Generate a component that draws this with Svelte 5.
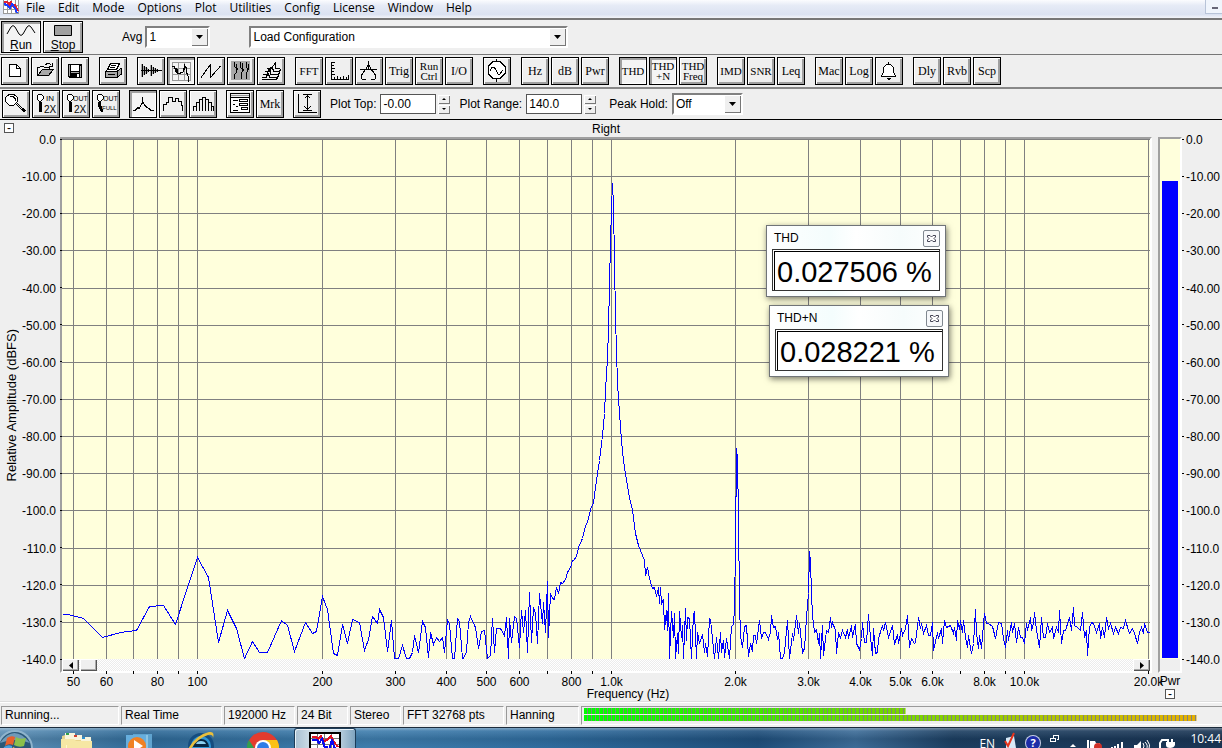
<script lang="ts">
  type Icon = {
    line?: string;
    fill?: string;
    gray?: string;
    grayLine?: string;
    white?: string;
    texts?: { x: number; y: number; size: number; text: string }[];
  };
  type Tool = { label: string; text?: string[]; small?: boolean; icon?: string; on?: boolean };

  const menus = ['File', 'Edit', 'Mode', 'Options', 'Plot', 'Utilities', 'Config', 'License', 'Window', 'Help'];

  const lens = 'M5 2h2l2 2v3l-2 2h-2l-2-2v-3z';
  const lensHandle = 'M5 10h3v10h-3z';

  // toolbar glyphs, drawn on a 24x24 grid
  const icons: Record<string, Icon> = {
    new: { white: 'M6.5 5.5h7l4 4v8h-11z', line: 'M6.5 5.5h7l4 4v8h-11zM13.5 5.5v4h4' },
    open: {
      gray: 'M5.5 17l4-6h11l-4 6z',
      line: 'M4.5 16.5v-8h2l1-1h3l1 1h5v2M4.5 16.5l5-6h11l-5 6zM12.5 5.5l2-1h2l2 2M19.5 4v3.5h-3.5'
    },
    save: {
      fill: 'M5 5h14v14h-13l-1-1z',
      white: 'M8 6h8v6h-8zM14 15h2v3h-2z',
      gray: 'M6 6h1v11h-1zM17 7h1v11h-1zM8 13h8v1h-8z'
    },
    print: {
      white: 'M9.5 4.5h9l-3 7h-9z',
      gray: 'M5 13h12v5h-12zM17 12l3-2v5l-3 3z',
      line: 'M9.5 4.5h9l-3 6h-9zM10 6.5h5M9 8.5h5M4.5 12.5l2-2M16 12.5l4-3M4.5 12.5h12v6h-12zM20.5 9v6l-4 3M7 15.5h7'
    },
    wave: {
      line: 'M2 11.5h21M3.5 5v13M5.5 7v9M7.5 8v7M9.5 10v3M12.5 6v11M14.5 8v7M16.5 9v5M18.5 10v3',
      gray: 'M2 5l8 5v3l-8 5zM11 6l8 5v1l-8 5z'
    },
    spectrum: {
      grayLine: 'M3.5 3.5h18v18h-18zM9.5 3v18M15.5 3v18M3 9.5h18M3 15.5h18',
      line: 'M3 7.5h2l1 2v3l2-3 1 5h2l1-1h2l1-4v-4l2 3v4l2 4 1 6M7.5 9v5M15.5 6v5'
    },
    zigzag: { line: 'M2 18.5L11.5 5.5V18.5L21.5 7' },
    spectrogram: {
      gray: 'M2 2h19v19h-19z',
      line: 'M5.5 3v4l2 3v3l-2 3v4M11.5 3v5l2 3-1 4v5M17.5 3v4l1 4-1 4v5M7.5 5v3l1 3M13.5 4v4l1 4M19.5 5v3l-1 5'
    },
    waterfall: {
      line: 'M3 20.5h14l2-2M3 18.5h4l2-4 2 4h7l2-2M4 15.5h4l2-5 2 5h7l2-2M6 12.5h4l3-4 2 4h5l2-2M8 9.5h4l4-5v5h5M11.5 8v8'
    },
    axes: {
      line: 'M4.5 3v17.5h17M4 3.5h4M4 6.5h3M4 9.5h4M4 12.5h3M4 15.5h4M7.5 18v2M10.5 17v3M13.5 18v2M16.5 17v3M19.5 18v2M21.5 16v4'
    },
    peak: {
      line: 'M11.5 2v9M9 10.5L11.5 5l2.5 5.5M3 10.5h17M9 10l-3 4-2 3 1 3h4M14 10l3 4 2 3-1 3h-4'
    },
    generator: {
      white: 'M8 2h7l5 5v8l-5 5h-7l-5-5v-8z',
      line: 'M8 2.5h7l5 5v7l-5 5h-7l-5-5v-7zM11.5 0v2M11.5 20v3M5 12l2-4h2l2 3 2 4h2l3-4'
    },
    bell: {
      white: 'M4 17l3-4v-5l3-3h3l3 3v5l3 4z',
      line: 'M11.5 3v2M4.5 17.5v-1l2-3v-5l3-3h4l3 3v5l2 3v1z',
      fill: 'M9 19h5l-2 2h-1z'
    },
    zoom: {
      white: 'M5 3h5l3 3v3l-3 4h-5l-3-4v-3z',
      line: 'M5 2.5h5l3.5 3v4l-3.5 3.5h-5l-3.5-3.5v-4zM6 4.5h3l2 2v2M12.5 12.5l8 7.5M13.5 11.5l8 7.5'
    },
    zoomIn: {
      white: lens,
      line: lens,
      fill: lensHandle,
      texts: [{ x: 12, y: 9, size: 8, text: 'IN' }, { x: 10, y: 21, size: 10, text: '2X' }]
    },
    zoomOut: {
      white: lens,
      line: lens,
      fill: lensHandle,
      texts: [{ x: 9, y: 9, size: 7, text: 'OUT' }, { x: 10, y: 21, size: 10, text: '2X' }]
    },
    zoomFull: {
      white: lens,
      line: lens,
      fill: 'M4 10h3v3l2 5v2h-2l-3-6z',
      texts: [{ x: 9, y: 9, size: 7, text: 'OUT' }, { x: 8, y: 18, size: 6, text: 'FULL' }]
    },
    line: { line: 'M2 18.5h2l3-3 1 1 3-5v-7l1 6 2 3 2 2 2 1 2 2h3' },
    octave: { line: 'M2.5 19v-7h3v-2h2v-5h4v4h3v-3h3v3h3v4h1v6' },
    third: {
      line: 'M2.5 19v-5h3v-4h3v-3h3v-2h3v2h3v3h3v4h2v5M5.5 11v8M8.5 8v11M11.5 6v13M14.5 6v13M17.5 8v11M20.5 11v8'
    },
    list: {
      white: 'M3 5h18v15h-18z',
      grayLine: 'M3 3.5h18',
      line: 'M2.5 1.5h19v19h-19zM2 5.5h19M5 8.5h5M5 12.5h2M8 14.5h2M5 18.5h5M11.5 7.5h8v2h-8zM11.5 11.5h8v2h-8zM13.5 15.5h6v2h-6z'
    },
    fit: {
      line: 'M3.5 2v18.5h18M8 2.5h9M8 18.5h9M12.5 3v15M9.5 6.5l3-3 3 3M9.5 14.5l3 3 3-3'
    }
  };

  const mainTools: Tool[][] = [
    [{ label: 'New', icon: 'new' }, { label: 'Open', icon: 'open' }, { label: 'Save', icon: 'save' }],
    [{ label: 'Print', icon: 'print' }],
    [
      { label: 'Time series', icon: 'wave' },
      { label: 'Spectrum', icon: 'spectrum', on: true },
      { label: 'Phase', icon: 'zigzag' },
      { label: 'Spectrogram', icon: 'spectrogram' },
      { label: '3-D surface', icon: 'waterfall' }
    ],
    [
      { label: 'FFT settings', text: ['FFT'], small: true },
      { label: 'Scaling', icon: 'axes' },
      { label: 'Calibration', icon: 'peak' },
      { label: 'Triggering', text: ['Trig'] },
      { label: 'Run control', text: ['Run', 'Ctrl'], small: true },
      { label: 'Device', text: ['I/O'] }
    ],
    [{ label: 'Signal generator', icon: 'generator' }],
    [
      { label: 'Peak frequency', text: ['Hz'] },
      { label: 'Peak amplitude', text: ['dB'] },
      { label: 'Total power', text: ['Pwr'] }
    ],
    [
      { label: 'THD', text: ['THD'], small: true, on: true },
      { label: 'THD+N', text: ['THD', '+N'], small: true, on: true },
      { label: 'THD vs frequency', text: ['THD', 'Freq'], small: true }
    ],
    [
      { label: 'IMD', text: ['IMD'], small: true },
      { label: 'SNR', text: ['SNR'], small: true },
      { label: 'Leq', text: ['Leq'] }
    ],
    [
      { label: 'Macro', text: ['Mac'] },
      { label: 'Logging', text: ['Log'] },
      { label: 'Alarm', icon: 'bell' }
    ],
    [
      { label: 'Delay finder', text: ['Dly'] },
      { label: 'Reverberation', text: ['Rvb'] },
      { label: 'Scope', text: ['Scp'] }
    ]
  ];

  const plotTools: Tool[][] = [
    [
      { label: 'Zoom', icon: 'zoom' },
      { label: 'Zoom in 2X', icon: 'zoomIn' },
      { label: 'Zoom out 2X', icon: 'zoomOut' },
      { label: 'Zoom out full', icon: 'zoomFull' }
    ],
    [
      { label: 'Narrowband', icon: 'line', on: true },
      { label: 'Octave', icon: 'octave' },
      { label: 'Third octave', icon: 'third' }
    ],
    [{ label: 'Plot options', icon: 'list' }, { label: 'Markers', text: ['Mrk'] }],
    [{ label: 'Autoscale', icon: 'fit' }]
  ];

  let plotTop = '-0.00';
  let plotRange = '140.0';

  const W = 1088;
  const H = 520;
  const freqX = (f: number) => Math.round(135.4 + 413.3 * Math.log10(f / 100)) + 0.5;

  const freqs = [
    50, 60, 70, 80, 90, 100, 200, 300, 400, 500, 600, 700, 800, 900,
    1000, 2000, 3000, 4000, 5000, 6000, 7000, 8000, 9000, 10000, 20000
  ];
  const unlabelled = [70, 90, 700, 900, 7000, 9000];
  const freqLabel = (f: number) => (f < 1000 ? String(f) : (f / 1000).toFixed(1) + 'k');

  const levels = Array.from({ length: 15 }, (_, i) => i * -10);
  const levelLabel = (v: number) => (v === 0 ? '0.0' : v > -100 ? v.toFixed(2) : v.toFixed(1));
  const levelPct = (v: number) => (v / -140) * 100;

  const trace =
    '0,475 6,475 21,479 40,498 58,493 74,491 87,467 101,466 113,485 125,448 135,418 146,438 156,503 165,471 ' +
    '174,489 182,519 190,502 197,513 205,513 219,481 225,486 232,512 243,483 250,494 254,492 260,457 265,470 ' +
    '271,514 275,516 280,485 285,504 290,480 297,483 302,511 306,500 310,477 315,484 317,470 321,478 325,512 ' +
    '329,481 332,519 336,519 340,506 344,519 347,519 350,513 352,496 356,513 360,482 363,488 366,518 368,493 ' +
    '371,505 374,498 377,502 380,498 382,513 385,480 387,485 390,519 392,519 395,479 397,482 400,519 401,519 ' +
    '404,512 406,483 408,477 413,488 416,509 419,492 422,491 425,519 428,516 430,479 432,513 434,489 438,489 ' +
    '442,496 444,478 446,519 447,479 449,503 452,477 454,479 457,508 459,471 461,493 463,471 465,513 467,453 ' +
    '469,503 471,468 473,474 475,504 477,454 480,484 481,463 483,493 485,442 486,498 488,454 490,459 492,460 ' +
    '494,448 496,454 498,443 500,444 503,440 505,433 508,428 510,421 511,421 514,417 516,408 520,399 523,386 ' +
    '525,383 528,370 531,363 533,348 534,341 537,321 540,296 542,274 543,251 545,219 546,189 547,146 548,103 ' +
    '549,69 550,44 551,66 552,123 553,178 554,211 555,244 557,274 559,301 561,321 564,341 567,358 570,370 ' +
    '573,394 576,406 580,416 582,421 583,436 585,428 587,439 590,449 592,448 594,457 596,448 597,464 598,448 ' +
    '599,464 601,460 602,490 604,471 605,491 606,454 607,519 609,472 611,498 612,474 613,519 615,494 616,514 ' +
    '617,472 619,498 620,486 621,519 623,469 624,501 625,478 627,479 629,519 631,475 632,473 634,519 635,493 ' +
    '637,504 640,495 642,513 643,504 645,517 647,479 648,480 652,519 654,498 656,519 658,493 659,513 661,501 ' +
    '662,518 664,499 667,519 669,487 671,485 672,469 673,408 674,309 675,320 676,378 677,463 678,496 680,508 ' +
    '682,487 684,486 686,517 688,504 690,512 691,496 693,496 694,504 697,481 699,499 701,493 703,493 706,500 ' +
    '707,495 708,494 709,476 711,488 713,487 715,500 716,493 718,519 720,519 722,513 725,481 727,519 730,494 ' +
    '731,501 734,476 736,494 737,484 740,513 742,509 744,478 746,454 747,412 748,422 749,454 750,476 752,493 ' +
    '754,490 756,504 757,494 758,519 760,486 761,516 764,491 766,493 768,478 769,488 770,483 773,491 774,514 ' +
    '776,494 778,498 780,491 783,498 785,490 786,499 789,486 790,498 792,488 793,486 794,504 797,510 799,499 ' +
    '800,483 802,503 804,503 806,475 807,488 810,516 811,489 813,514 815,513 816,499 820,486 821,491 823,483 ' +
    '826,498 830,486 832,505 835,495 836,504 839,489 840,496 843,489 845,476 847,508 849,499 852,504 853,503 ' +
    '856,478 858,489 859,484 861,494 864,486 866,496 868,496 870,483 871,511 875,493 876,499 879,489 880,504 ' +
    '882,481 884,488 888,486 891,494 892,488 894,501 895,481 897,490 898,481 900,493 901,481 903,498 905,508 ' +
    '906,496 909,514 911,504 913,470 914,494 916,509 917,496 919,509 921,484 922,474 924,484 926,484 930,487 ' +
    '933,499 936,483 939,484 941,499 943,508 945,491 946,501 949,483 950,493 952,484 954,503 956,488 958,498 ' +
    '960,498 962,504 964,484 965,491 968,478 969,491 971,484 972,473 974,491 977,508 979,478 981,498 983,498 ' +
    '985,484 987,493 990,488 991,499 994,488 996,493 997,471 999,504 1001,491 1003,491 1007,478 1009,491 ' +
    '1011,468 1012,486 1015,488 1018,491 1020,473 1022,498 1024,491 1025,516 1027,488 1029,483 1031,484 ' +
    '1034,493 1037,484 1038,499 1040,488 1042,498 1044,478 1046,489 1048,484 1051,494 1053,488 1056,494 ' +
    '1058,488 1061,489 1063,481 1066,491 1067,494 1070,489 1072,494 1075,504 1077,493 1079,488 1081,494 ' +
    '1082,484 1085,493 1087,493';

  const readouts = [
    { title: 'THD', value: '0.027506 %', x: 704, y: 86 },
    { title: 'THD+N', value: '0.028221 %', x: 707, y: 166 }
  ];

  const status = [
    { text: 'Running...', width: 118 },
    { text: 'Real Time', width: 101 },
    { text: '192000 Hz', width: 71 },
    { text: '24 Bit', width: 51 },
    { text: 'Stereo', width: 51 },
    { text: 'FFT 32768 pts', width: 101 },
    { text: 'Hanning', width: 73 }
  ];
  const inputLevels = [50.4, 96];
</script>

{#snippet tool(t: Tool)}
  <button class="tool" class:on={t.on} class:small={t.small} aria-label={t.label}>
    {#if t.icon}
      {@const ic = icons[t.icon]}
      <svg width="24" height="24" viewBox="0 0 24 24" shape-rendering="crispEdges">
        {#if ic.grayLine}<path d={ic.grayLine} fill="none" stroke="#999" />{/if}
        {#if ic.fill}<path d={ic.fill} />{/if}
        {#if ic.white}<path d={ic.white} fill="#fff" />{/if}
        {#if ic.gray}<path d={ic.gray} fill="#a8a8a8" />{/if}
        {#if ic.line}<path d={ic.line} fill="none" stroke="#000" />{/if}
        {#each ic.texts ?? [] as s}
          <text x={s.x} y={s.y} font-size={s.size}>{s.text}</text>
        {/each}
      </svg>
    {:else}
      {#each t.text ?? [] as row}<span>{row}</span>{/each}
    {/if}
  </button>
{/snippet}

{#snippet groups(list: Tool[][])}
  {#each list as group}
    <div class="group">
      {#each group as t}{@render tool(t)}{/each}
    </div>
  {/each}
{/snippet}

{#snippet dropArrow()}
  <span class="drop"><svg width="7" height="4" viewBox="0 0 7 4"><path d="M0 0h7L3.5 4z" /></svg></span>
{/snippet}

{#snippet spinner(name: string)}
  <span class="spinner">
    <button aria-label="{name} up"><svg width="4" height="2" viewBox="0 0 4 2"><path d="M0 2h4L2 0z" /></svg></button>
    <button aria-label="{name} down"><svg width="4" height="2" viewBox="0 0 4 2"><path d="M0 0h4L2 2z" /></svg></button>
  </span>
{/snippet}

<div class="app">
  <nav class="menubar">
    <svg class="appicon" width="16" height="14" viewBox="0 0 16 14" shape-rendering="crispEdges">
      <path d="M0 0h16v14h-16z" fill="#fff" />
      <path d="M.5 0v13.5h15v-13.5M4.5 0v13M8.5 0v13M12.5 0v13M0 5.5h16M0 9.5h16" fill="none" stroke="#9a9a9a" />
      <path d="M1 2l3 0 2 3 2-3 2 4 2-1 3 6" fill="none" stroke="#e02030" stroke-width="2" />
      <path d="M1 4l3 1 3 3 2-4 3 4 2 5" fill="none" stroke="#1c3cff" stroke-width="2" />
    </svg>
    {#each menus as m}<button class="menu">{m}</button>{/each}
    <button class="minimize" aria-label="Minimize"><i></i></button>
  </nav>

  <div class="bar run-bar">
    <button class="run on">
      <svg width="30" height="15" viewBox="0 0 30 15"><path d="M1 11l4-7q2-3 4 0l4 7q2 3 4 0l4-7q2-3 4 0l4 6" fill="none" stroke="#000" /></svg>
      <span><u>R</u>un</span>
    </button>
    <button class="run">
      <svg width="30" height="15" viewBox="0 0 30 15"><path d="M6.5 2.5h17v10h-17z" fill="#a0a0a0" stroke="#000" /></svg>
      <span><u>S</u>top</span>
    </button>
    <label class="avg" for="avg">Avg</label>
    <span class="combo avg-combo">
      <select id="avg"><option>1</option><option>2</option><option>4</option></select>
      {@render dropArrow()}
    </span>
    <span class="combo config-combo">
      <select aria-label="Configuration"><option>Load Configuration</option></select>
      {@render dropArrow()}
    </span>
  </div>

  <div class="bar main-bar">{@render groups(mainTools)}</div>

  <div class="bar plot-bar">
    {@render groups(plotTools)}
    <div class="field">
      <label for="top">Plot Top:</label>
      <input id="top" type="text" bind:value={plotTop} />
      {@render spinner('Plot top')}
    </div>
    <div class="field">
      <label for="range">Plot Range:</label>
      <input id="range" type="text" bind:value={plotRange} />
      {@render spinner('Plot range')}
    </div>
    <div class="field peak">
      <label for="hold">Peak Hold:</label>
      <span class="combo hold-combo">
        <select id="hold"><option>Off</option><option>On</option></select>
        {@render dropArrow()}
      </span>
    </div>
  </div>

  <main>
    <div class="corner"><button class="fold" aria-label="Collapse plot">-</button></div>
    <h1>Right</h1>

    <div class="yaxis">
      <div class="ytitle"><span>Relative Amplitude (dBFS)</span></div>
      <div class="scale">
        <svg width="42" shape-rendering="crispEdges">
          {#each levels as v}
            <text x="36" y="{levelPct(v)}%" dy="5" text-anchor="end">{levelLabel(v)}</text>
            <line x1="40" x2="42" y1="{levelPct(v)}%" y2="{levelPct(v)}%" />
          {/each}
        </svg>
      </div>
    </div>

    <div class="plot">
      <div class="canvas">
        <svg viewBox="0 0 {W} {H}" preserveAspectRatio="none" shape-rendering="crispEdges">
          <g stroke="#808080">
            {#each levels.slice(0, -1) as v}
              {@const y = Math.round((levelPct(v) * H) / 100) + 0.5}
              <line x1="0" x2={W} y1={y} y2={y} />
            {/each}
            {#each freqs as f}
              <line x1={freqX(f)} x2={freqX(f)} y1="0" y2={H} />
            {/each}
          </g>
          <polyline points={trace} transform="translate(0.5 0.5)" fill="none" stroke="#00f" />
        </svg>
        {#each readouts as r}
          <section class="readout" style="left:{(r.x / W) * 100}%;top:{(r.y / H) * 100}%">
            <header>
              <h2>{r.title}</h2>
              <button aria-label="Close {r.title}">
                <svg width="9" height="9" viewBox="0 0 9 9"><path d="M.5 1.5h2.500l1.500 1.500 1.500-1.500h2.500v1.500L7 4.500l1.500 1.500v1.500H6L4.500 6 3 7.500H.5V6L2 4.500.5 3z" fill="#fff" stroke="#445" /></svg>
              </button>
            </header>
            <output>{r.value}</output>
          </section>
        {/each}
      </div>
      <div class="scroll">
        <button aria-label="Scroll left"><svg width="4" height="7" viewBox="0 0 4 7"><path d="M4 0v7L0 3.5z" /></svg></button>
        <input type="range" min="0" max="100" value="0" aria-label="Frequency position" />
        <button aria-label="Scroll right"><svg width="4" height="7" viewBox="0 0 4 7"><path d="M0 0v7l4-3.5z" /></svg></button>
      </div>
    </div>

    <div class="meter">
      <div class="column"><div class="level" style="height:92%"></div></div>
    </div>

    <div class="scale right">
      <svg width="40" shape-rendering="crispEdges">
        {#each levels as v}
          <line x1="0" x2="2" y1="{levelPct(v)}%" y2="{levelPct(v)}%" />
          <text x="4" y="{levelPct(v)}%" dy="5">{levelLabel(v)}</text>
        {/each}
      </svg>
    </div>

    <div class="xaxis">
      <svg class="ticks" shape-rendering="crispEdges">
        {#each freqs as f}
          {@const x = (freqX(f) / W) * 100}
          <line x1="{x}%" x2="{x}%" y1="0" y2="3" />
          {#if !unlabelled.includes(f)}
            <text x="{x}%" y="15" text-anchor="middle">{freqLabel(f)}</text>
          {/if}
        {/each}
      </svg>
      <p>Frequency (Hz)</p>
    </div>
    <div class="pwr">
      <span>Pwr</span>
      <button class="fold" aria-label="Collapse power meter">-</button>
    </div>
  </main>

  <footer class="status">
    {#each status as s}<div class="cell" style="width:{s.width}px">{s.text}</div>{/each}
    <div class="cell levels">
      {#each inputLevels as l}<div class="led" style="clip-path:inset(0 {100 - l}% 0 0)"></div>{/each}
    </div>
  </footer>

  <div class="taskbar">
    <button class="start" aria-label="Start">
      <svg width="34" height="20" viewBox="0 0 34 20">
        <circle cx="15" cy="19" r="18" fill="#8fb4cd" />
        <circle cx="15" cy="19" r="16" fill="#2b5878" />
        <path d="M0 14q14-20 30 0-15-6-30 0z" fill="#6f9ab8" />
        <path d="M7 9q4-3 8-1l-2 8q-4-2-8 1z" fill="#e8602c" />
        <path d="M16 8q4 3 10 1l-2 8q-5 2-10-1z" fill="#8cc04a" />
        <path d="M4 18q4-3 8-1v4h-9z" fill="#4aa0e0" />
        <path d="M13 18q5 3 10 1v3h-11z" fill="#f4c838" />
      </svg>
    </button>
    <button class="task" aria-label="Explorer">
      <svg width="32" height="20" viewBox="0 0 32 20">
        <path d="M1 5l3-1h9l2 3h15l1 13h-30z" fill="#e8d48c" />
        <path d="M4 2h10v6h-10zM12 4h9v5h-9zM20 6h10v4h-10z" fill="#f8f4dc" />
        <path d="M5 2h3v2h-3z" fill="#30a048" /><path d="M13 4h3v2h-3z" fill="#d04030" /><path d="M21 6h3v2h-3z" fill="#3090d0" />
        <path d="M0 8h13l2 2h16v10h-31z" fill="#f6e7a4" />
        <path d="M5 14h1v6h-1z" fill="#fff8d0" />
      </svg>
    </button>
    <button class="task" aria-label="Media Player">
      <svg width="28" height="20" viewBox="0 0 28 20">
        <path d="M8 3h19v17h-19z" fill="#5fa3cf" /><path d="M5 4h18v16h-18z" fill="#8cc4e4" /><path d="M1 4h20v16h-20z" fill="#66aede" />
        <circle cx="12" cy="15" r="9" fill="#f08024" /><path d="M9 9l9 6-9 6z" fill="#fff" />
      </svg>
    </button>
    <button class="task" aria-label="Internet Explorer">
      <svg width="30" height="20" viewBox="0 0 30 20">
        <circle cx="15" cy="15" r="13" fill="#154d80" /><circle cx="15" cy="15" r="10" fill="#2f95d4" />
        <path d="M7 16q1-8 8-8t8 8z" fill="#082844" /><path d="M10 13q1-3 5-3t5 3z" fill="#8cd0f0" />
        <path d="M1 20Q9 4 23 1q6-1 4 6 0-4-5-3Q10 8 4 20z" fill="#e9bf3c" />
      </svg>
    </button>
    <button class="task" aria-label="Chrome">
      <svg width="32" height="20" viewBox="0 0 32 20">
        <circle cx="16" cy="17" r="16" fill="#e33b2e" />
        <path d="M2 9l7 11h-9q-1-6 2-11z" fill="#30a050" /><path d="M16 9h14q3 6 2 11h-9z" fill="#fbc116" />
        <circle cx="16" cy="17" r="8" fill="#fff" /><circle cx="16" cy="17" r="6" fill="#2f7de8" />
      </svg>
    </button>
    <button class="task active" aria-label="Spectrum analyzer">
      <svg width="32" height="20" viewBox="0 0 32 20" shape-rendering="crispEdges">
        <path d="M1 1h30v19h-30z" fill="#fff" />
        <path d="M8.5 2v18M15.5 2v18M22.5 2v18M2 6.5h28M2 12.5h28" stroke="#777" fill="none" />
        <path d="M1 20v-19h30v19" stroke="#000" stroke-width="2" fill="none" />
        <path d="M3 5h4l2 2 3-3 3 5 3-1 4-4 3 6 4 5" stroke="#e01020" stroke-width="2" fill="none" />
        <path d="M3 8h5l2 3 3-4 3 9 2-1 2 4 3-12 2 8 4 4" stroke="#0808f0" stroke-width="2" fill="none" />
      </svg>
    </button>
    <div class="tray">
      <span class="lang">EN</span>
      <svg width="12" height="20" viewBox="0 0 12 20"><path d="M2 10l8-2 2 12h-10z" fill="#d8eaf8" /><path d="M1 13l3 5 6-13" fill="none" stroke="#e8341c" stroke-width="2" /></svg>
      <svg width="16" height="20" viewBox="0 0 16 20"><circle cx="8" cy="15" r="8" fill="#c8d0e8" /><circle cx="8" cy="15" r="7" fill="#1c2ca8" /><text x="8" y="19" text-anchor="middle" fill="#fff" font-size="11" font-weight="bold">?</text></svg>
      <svg width="10" height="20" viewBox="0 0 10 20" shape-rendering="crispEdges"><path d="M3.5 10.5v-3h5v4h-2M.5 10.5h5v3h-5z" fill="none" stroke="#fff" /></svg>
      <svg width="8" height="20" viewBox="0 0 8 20"><path d="M1 19l3-3 3 3z" fill="#fff" /></svg>
      <svg width="16" height="20" viewBox="0 0 16 20"><path d="M1 12h2v8h-2zM4 13h5l1 2h4l-1 2 1 3h-10z" fill="#fff" /><circle cx="12" cy="19" r="4" fill="#d03028" /></svg>
      <svg width="14" height="20" viewBox="0 0 14 20"><path d="M0 19h2v1h-2zM3 18h2v2h-2zM6 16h2v4h-2zM10 14h2v6h-2z" fill="#fff" /></svg>
      <svg width="16" height="20" viewBox="0 0 16 20"><path d="M0 17h3l4-4v7h-7z" fill="#fff" /><path d="M9 15q2 3 0 6M11 14q4 4 1 7M13 12q4 5 2 9" fill="none" stroke="#fff" /></svg>
      <svg width="16" height="20" viewBox="0 0 16 20"><path d="M8 11h2v3h2v-3h2v3h2v3q-1 3-5 3t-4-3v-3h1z" fill="#fff" /><path d="M8 12h-5l-2 3v6" fill="none" stroke="#fff" stroke-width="2" /></svg>
      <time>10:44</time>
    </div>
  </div>
</div>

<style>
  :global(body) {
    margin: 0;
    background: #efefef;
  }

  .app {
    display: flex;
    flex-direction: column;
    height: 100vh;
    min-height: 480px;
    overflow: hidden;
    background: #efefef;
    color: #000;
    font: 12px/14px 'Liberation Sans', Arial, sans-serif;
  }

  button, input, select {
    box-sizing: border-box;
    margin: 0;
    padding: 0;
    border: 0;
    border-radius: 0;
    background: none;
    color: inherit;
    font: inherit;
  }

  svg {
    display: block;
  }

  /* menu */
  .menubar {
    display: flex;
    flex: none;
    align-items: flex-start;
    gap: 13px;
    height: 18px;
    padding-left: 3px;
    border-bottom: 2px solid #777;
    background: linear-gradient(#fbfcfe, #e6ebf6 30%, #dbe2f1 80%, #f2f4f9);
  }
  .appicon {
    margin-right: -6px;
  }
  .menu {
    font: 12px/16px 'Open Sans', 'Noto Sans', sans-serif;
  }
  .minimize {
    display: flex;
    align-items: flex-end;
    width: 17px;
    height: 14px;
    margin-left: auto;
    padding: 0 4px 4px 6px;
    border: 1px solid #b8c4d8;
    border-width: 0 0 1px 1px;
    background: #f0f5fc;
  }
  .minimize i {
    width: 8px;
    height: 2px;
    background: #667;
  }

  /* toolbars */
  .bar {
    display: flex;
    flex: none;
    align-items: center;
  }
  .run-bar {
    height: 34px;
    padding-left: 1px;
    gap: 2px;
    border-bottom: 1px solid #777;
  }
  .main-bar {
    gap: 10px;
    padding: 2px 1px;
    border-bottom: 2px solid #888;
  }
  .plot-bar {
    gap: 9px;
    padding: 1px 2px;
    border-bottom: 1px solid #000;
  }
  .group {
    display: flex;
    gap: 2px;
  }

  .tool, .run {
    display: flex;
    flex: none;
    flex-direction: column;
    align-items: center;
    justify-content: center;
    border: 1px solid #000;
    background: #efefef;
    box-shadow: inset 1px 1px #fff, inset -2px -2px #a0a0a0;
  }
  .tool {
    width: 28px;
    height: 28px;
    font: 12px/12px 'Liberation Serif', 'Times New Roman', serif;
    white-space: nowrap;
  }
  .tool.small {
    font-size: 11px;
    line-height: 10px;
  }
  .tool text {
    font-family: 'Liberation Sans', Arial, sans-serif;
  }
  .run {
    width: 40px;
    height: 32px;
    line-height: 14px;
  }
  .on {
    background: #f4f4f4;
    box-shadow: inset 2px 2px #a0a0a0, inset -1px -1px #fff;
  }

  .avg {
    margin-left: 37px;
  }
  .combo {
    display: flex;
    box-sizing: border-box;
    height: 22px;
    border: 2px solid #808080;
    border-right-color: #fff;
    border-bottom-color: #fff;
    background: #fff;
  }
  .combo select {
    flex: 1;
    min-width: 0;
    padding-left: 2px;
    appearance: none;
    outline: 0;
  }
  .drop {
    display: flex;
    flex: none;
    align-items: center;
    justify-content: center;
    width: 17px;
    margin-left: -17px;
    background: #efefef;
    box-shadow: inset 1px 1px #fff, inset -1px -1px #777;
    pointer-events: none;
  }
  .avg-combo {
    width: 65px;
    margin-left: 1px;
  }
  .config-combo {
    width: 319px;
    margin-left: 37px;
  }
  .hold-combo {
    width: 71px;
  }

  .field {
    display: flex;
    align-items: center;
    gap: 2px;
  }
  .field label {
    margin-right: 2px;
  }
  .field.peak {
    margin-left: 4px;
  }
  .field input {
    width: 56px;
    height: 20px;
    padding-left: 2px;
    border: 1px solid #555;
    background: #fff;
  }
  .spinner {
    display: flex;
    flex-direction: column;
    gap: 1px;
  }
  .spinner button {
    display: flex;
    align-items: center;
    justify-content: center;
    width: 12px;
    height: 9px;
    background: #efefef;
    box-shadow: inset 1px 1px #fff, inset -1px -1px #777;
  }

  /* plot area */
  main {
    display: grid;
    flex: 1;
    grid-template: 17px minmax(0, 1fr) 28px / 60px minmax(0, 1fr) 6px 24px 40px;
    min-height: 0;
  }
  .corner {
    padding: 3px 4px;
  }
  .fold {
    display: flex;
    align-items: center;
    justify-content: center;
    width: 10px;
    height: 10px;
    border: 1px solid #555;
    background: #fff;
    line-height: 8px;
  }
  h1, h2, p {
    margin: 0;
    font: inherit;
  }
  h1 {
    line-height: 18px;
    text-align: center;
  }

  .yaxis {
    display: flex;
    grid-area: 2 / 1;
    margin-right: -2px;
    z-index: 1;
  }
  .ytitle {
    display: flex;
    flex: 1;
    align-items: center;
    justify-content: center;
    padding-left: 4px;
    font-size: 13px;
  }
  .ytitle span {
    writing-mode: vertical-rl;
    rotate: 180deg;
    white-space: nowrap;
  }
  .scale {
    flex: none;
    padding: 2px 0 14px;
  }
  .scale svg {
    height: 100%;
    overflow: visible;
  }
  .scale line, .ticks line {
    stroke: #000;
  }
  .scale.right {
    grid-area: 2 / 5;
    min-height: 0;
  }

  .plot {
    display: flex;
    flex-direction: column;
    grid-area: 2 / 2;
    border: 2px solid #a0a0a0;
    border-right-color: #fff;
    border-bottom-color: #fff;
  }
  .canvas {
    position: relative;
    flex: 1;
    min-height: 0;
    background: #ffffdc;
  }
  .canvas > svg {
    width: 100%;
    height: 100%;
  }

  .readout {
    position: absolute;
    box-sizing: border-box;
    width: 180px;
    padding: 4px 5px 5px;
    border: 1px solid #707478;
    background: linear-gradient(90deg, #fff, #f4fdfd 35%, #fff 50%, #f6fcfc 75%, #fff);
    box-shadow: 1px 2px 6px #0008;
  }
  .readout header {
    display: flex;
    align-items: flex-start;
    justify-content: space-between;
    height: 19px;
    padding-left: 2px;
  }
  .readout h2 {
    line-height: 16px;
  }
  .readout button {
    display: flex;
    align-items: center;
    justify-content: center;
    width: 17px;
    height: 17px;
    border: 1px solid #808890;
    border-radius: 2px;
    background: #f6f8fa;
  }
  .readout output {
    display: block;
    padding: 5px 3px 1px 4px;
    border: 1px solid #333;
    background: #fff;
    box-shadow: inset 1px 1px #fff, inset 2px 2px #000;
    font-size: 29px;
    line-height: 34px;
    white-space: nowrap;
  }

  .scroll {
    display: flex;
    flex: none;
    height: 12px;
    background: repeating-conic-gradient(#fff 0 25%, #ececec 0 50%) 0 0 / 2px 2px;
  }
  .scroll button {
    display: flex;
    flex: none;
    align-items: center;
    justify-content: center;
    width: 17px;
    background: #efefef;
    box-shadow: inset 1px 1px #fff, inset -1px -1px #555, inset -2px -2px #aaa;
  }
  .scroll input {
    flex: 1;
    min-width: 0;
    height: 12px;
    margin-left: 1px;
    appearance: none;
  }
  .scroll input::-webkit-slider-thumb {
    width: 17px;
    height: 12px;
    appearance: none;
    background: #efefef;
    box-shadow: inset 1px 1px #fff, inset -1px -1px #555, inset -2px -2px #aaa;
  }

  .meter {
    display: flex;
    grid-area: 2 / 4;
    padding-bottom: 12px;
    border: 2px solid #a0a0a0;
    border-right-color: #fff;
    border-bottom-color: #fff;
  }
  .column {
    display: flex;
    flex: 1;
    align-items: flex-end;
    padding: 0 2px 1px;
    background: #ffffdc;
  }
  .level {
    flex: 1;
    background: #00f;
  }

  .xaxis {
    grid-area: 3 / 2;
    padding: 0 2px;
  }
  .ticks {
    position: relative;
    width: 100%;
    height: 16px;
    margin-top: -2px;
    overflow: visible;
  }
  .xaxis p {
    margin-left: 44px;
    text-align: center;
  }
  .pwr {
    display: flex;
    flex-direction: column;
    grid-area: 3 / 4;
    align-items: center;
    gap: 1px;
    padding-top: 1px;
  }

  /* status bar */
  .status {
    display: flex;
    flex: none;
    gap: 2px;
    padding: 3px 0 2px 1px;
    border-top: 1px solid #ddd;
    box-shadow: inset 0 1px #fff;
  }
  .cell {
    box-sizing: border-box;
    flex: none;
    height: 19px;
    margin-top: 1px;
    padding-left: 3px;
    border: 1px solid #999;
    border-right-color: #fff;
    border-bottom-color: #fff;
    line-height: 17px;
    white-space: nowrap;
  }
  .cell.levels {
    display: flex;
    flex: 1;
    flex-direction: column;
    gap: 1px;
    padding: 1px 0 0 2px;
    border-right: 0;
  }
  .led {
    height: 6px;
    background:
      repeating-linear-gradient(90deg, transparent 0 3px, #808080 3px 4px),
      linear-gradient(90deg, #0f0, #eeac00);
  }

  /* taskbar */
  .taskbar {
    display: flex;
    flex: none;
    align-items: flex-start;
    height: 20px;
    overflow: hidden;
    border-top: 1px solid #1c2c3c;
    background:
      linear-gradient(#ffffff60, #ffffff18 3px, #00000018 11px, #00000000),
      linear-gradient(90deg, #5f92b8, #2f6a98 12%, #3f7eae 30%, #2f6c9e 45%, #1f4f7c 62%, #3c6c98 70%, #1c3f62 78%, #1a3554);
  }
  .start {
    width: 46px;
    padding-top: 1px;
  }
  .task {
    display: flex;
    justify-content: center;
    width: 62px;
    height: 20px;
    padding-top: 3px;
  }
  .active {
    border: 1px solid #1c3c58;
    border-bottom: 0;
    border-radius: 3px 3px 0 0;
    background: linear-gradient(90deg, #a8c0d2, #d4e2ea 30%, #c4d6e2 70%, #7fa4c0);
    box-shadow: inset 1px 1px #e8f2f8;
  }
  .tray {
    display: flex;
    gap: 9px;
    margin-left: auto;
    padding-right: 1px;
    color: #fff;
    font: 12px/14px 'Open Sans', 'Noto Sans', sans-serif;
  }
  .lang {
    width: 16px;
    padding-top: 9px;
  }
  time {
    margin-left: 6px;
    padding-top: 4px;
  }
</style>
